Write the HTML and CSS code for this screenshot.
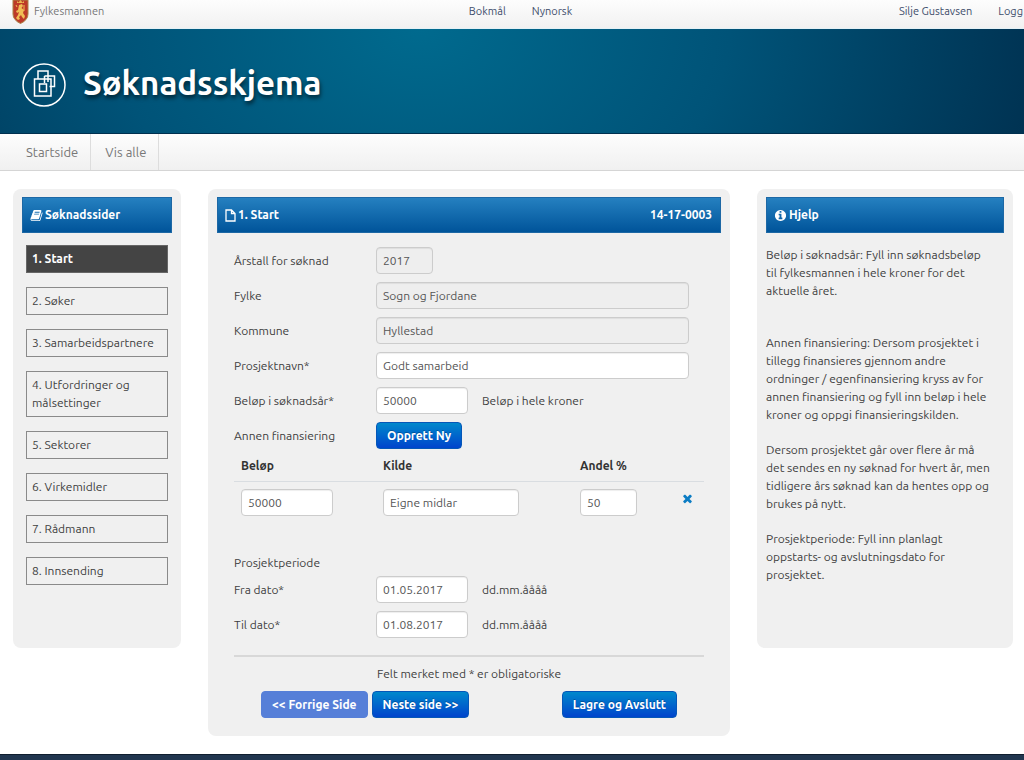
FILE: index.html
```html
<!DOCTYPE html>
<html lang="nb">
<head>
<meta charset="utf-8">
<meta name="viewport" content="width=device-width, initial-scale=1">
<title>Søknadsskjema</title>
<link rel="stylesheet" href="styles.css">
</head>
<body>
<div class="topbar">
  <div class="brand">
    <svg class="crest" viewBox="0 0 17 24" aria-hidden="true">
      <path d="M1 0h15v14q0 6-7.500 9.500Q1 20 1 14z" fill="#bd3a28" stroke="#a98145" stroke-width="1"/>
      <path d="M5 1l1.500 1.500L8.500 0l2 2.500L12 1v2H5z" fill="#e9b650"/>
      <path d="M7 5l3-1 1 2-1.500 2 2.500 2-1 3 2 3-1 3-2-2-1-2-2 2 1 2-2 1-2-2 2-3 1-3-2 1-1-2 2-1z" fill="#f0bd55"/>
      <path d="M12 5v6M4 5l1 2" stroke="#f0bd55" stroke-width="1"/>
    </svg>
    <span>Fylkesmannen</span>
  </div>
  <nav class="languages" aria-label="Språk"><a href="#">Bokmål</a><a href="#">Nynorsk</a></nav>
  <nav class="account" aria-label="Bruker"><a href="#">Silje Gustavsen</a><a href="#">Logg</a></nav>
</div>
<header class="banner">
  <svg class="emblem" viewBox="0 0 44 44" fill="none" stroke="#fff" aria-hidden="true">
    <circle cx="22" cy="22" r="21" stroke-width="1.500"/>
    <g stroke-width="1.500">
      <path d="M16 16V8h10v5"/>
      <path d="M29 23.500V33H12.500V16H22"/>
      <path d="M22.500 13h10v10.500h-5"/>
      <path d="M26 13v6M22.500 13v7M22 16h7v7.500"/>
      <rect x="17.500" y="21" width="7" height="7.500"/>
    </g>
  </svg>
  <h1>Søknadsskjema</h1>
</header>
<nav class="menu" aria-label="Hovedmeny"><a href="#">Startside</a><a href="#">Vis alle</a></nav>

<main class="columns">
  <aside class="panel">
    <h2 class="panel-title">
      <svg class="icon" viewBox="0 0 1792 1792" aria-hidden="true"><path d="M1703 478q40 57 18 129l-275 906q-19 64-76.500 107.500t-122.500 43.500h-923q-77 0-148.500-53.500t-99.500-131.500q-24-67-2-127 0-4 3-27t4-37q1-8-3-21.500t-3-19.500q2-11 8-21t16.500-23.500 16.500-23.500q23-38 45-91.500t30-91.500q3-10 .5-30t-.5-28q3-11 17-28t17-23q21-36 42-92t25-90q1-9-2.500-32t.5-28q4-13 22-30.500t22-22.500q19-26 42.500-84.500t27.500-96.500q1-8-3-25.500t-2-26.500q2-8 9-18t18-23 17-21q8-12 16.500-30.500t15-35 16-36 19.500-32 26.500-23.500 36-11.500 47.500 5.500l-1 3q38-9 51-9h761q74 0 114 56t18 130l-274 906q-36 119-71.500 153.500t-128.500 34.500h-869q-27 0-38 15-11 16-1 43 24 70 144 70h923q29 0 56-15.500t35-41.500l300-987q7-22 5-57 38 15 59 43zm-1064 2q-4 13 2 22.500t20 9.500h608q13 0 25.500-9.500t16.500-22.500l21-64q4-13-2-22.500t-20-9.500h-608q-13 0-25.500 9.500t-16.500 22.500zm-83 256q-4 13 2 22.500t20 9.500h608q13 0 25.500-9.500t16.500-22.500l21-64q4-13-2-22.500t-20-9.500h-608q-13 0-25.500 9.500t-16.500 22.500z"/></svg>
      <span>Søknadssider</span>
    </h2>
    <nav class="steps" aria-label="Søknadssider">
      <a class="step current" href="#" aria-current="page">1. Start</a>
      <a class="step" href="#">2. Søker</a>
      <a class="step" href="#">3. Samarbeidspartnere</a>
      <a class="step" href="#">4. Utfordringer og målsettinger</a>
      <a class="step" href="#">5. Sektorer</a>
      <a class="step" href="#">6. Virkemidler</a>
      <a class="step" href="#">7. Rådmann</a>
      <a class="step" href="#">8. Innsending</a>
    </nav>
  </aside>

  <section class="panel">
    <h2 class="panel-title">
      <svg class="icon narrow" viewBox="0 0 11 13" aria-hidden="true"><path d="M1 1h5.500L10 4.500V12H1zM6.500 1v3.500H10" fill="none" stroke="currentColor" stroke-width="1.300"/></svg>
      <span>1. Start</span>
      <span class="case-number">14-17-0003</span>
    </h2>
    <form class="form">
      <div class="row"><label for="year">Årstall for søknad</label><input id="year" class="field tiny" value="2017" disabled></div>
      <div class="row"><label for="county">Fylke</label><input id="county" class="field wide" value="Sogn og Fjordane" disabled></div>
      <div class="row"><label for="municipality">Kommune</label><input id="municipality" class="field wide" value="Hyllestad" disabled></div>
      <div class="row"><label for="project">Prosjektnavn*</label><input id="project" class="field wide" value="Godt samarbeid"></div>
      <div class="row"><label for="amount">Beløp i søknadsår*</label><input id="amount" class="field short" value="50000"><span class="hint">Beløp i hele kroner</span></div>
      <div class="row"><span class="row-label">Annen finansiering</span><button class="btn" type="button">Opprett Ny</button></div>
      <table class="funding">
        <thead>
          <tr><th class="col-amount" id="th-amount">Beløp</th><th class="col-source" id="th-source">Kilde</th><th class="col-share" id="th-share">Andel %</th><td></td></tr>
        </thead>
        <tbody>
          <tr>
            <td><input class="field short" value="50000" aria-labelledby="th-amount"></td>
            <td><input class="field medium" value="Eigne midlar" aria-labelledby="th-source"></td>
            <td><input class="field tiny" value="50" aria-labelledby="th-share"></td>
            <td><button class="remove" type="button" aria-label="Fjern"><svg class="icon" viewBox="0 0 1792 1792" aria-hidden="true"><path d="M1490 1322q0 40-28 68l-136 136q-28 28-68 28t-68-28l-294-294-294 294q-28 28-68 28t-68-28l-136-136q-28-28-28-68t28-68l294-294-294-294q-28-28-28-68t28-68l136-136q28-28 68-28t68 28l294 294 294-294q28-28 68-28t68 28l136 136q28 28 28 68t-28 68l-294 294 294 294q28 28 28 68z"/></svg></button></td>
          </tr>
        </tbody>
      </table>
      <p class="group-label">Prosjektperiode</p>
      <div class="row"><label for="from">Fra dato*</label><input id="from" class="field short" value="01.05.2017"><span class="hint">dd.mm.åååå</span></div>
      <div class="row"><label for="to">Til dato*</label><input id="to" class="field short" value="01.08.2017"><span class="hint">dd.mm.åååå</span></div>
      <hr class="rule">
      <p class="note">Felt merket med * er obligatoriske</p>
      <div class="actions">
        <button class="btn muted" type="button">&lt;&lt; Forrige Side</button>
        <button class="btn" type="button">Neste side &gt;&gt;</button>
        <button class="btn save" type="submit">Lagre og Avslutt</button>
      </div>
    </form>
  </section>

  <aside class="panel">
    <h2 class="panel-title">
      <svg class="icon" viewBox="0 0 1792 1792" aria-hidden="true"><path d="M1152 1376v-160q0-14-9-23t-23-9h-96v-512q0-14-9-23t-23-9h-320q-14 0-23 9t-9 23v160q0 14 9 23t23 9h96v320h-96q-14 0-23 9t-9 23v160q0 14 9 23t23 9h448q14 0 23-9t9-23zm-128-896v-160q0-14-9-23t-23-9h-192q-14 0-23 9t-9 23v160q0 14 9 23t23 9h192q14 0 23-9t9-23zm640 416q0 209-103 385.500t-279.500 279.500-385.500 103-385.500-103-279.500-279.500-103-385.500 103-385.500 279.500-279.500 385.500-103 385.500 103 279.500 279.500 103 385.500z"/></svg>
      <span>Hjelp</span>
    </h2>
    <div class="help">
      <p class="lead">Beløp i søknadsår: Fyll inn søknadsbeløp til fylkesmannen i hele kroner for det aktuelle året.</p>
      <p>Annen finansiering: Dersom prosjektet i tillegg finansieres gjennom andre ordninger / egenfinansiering kryss av for annen finansiering og fyll inn beløp i hele kroner og oppgi finansieringskilden.</p>
      <p>Dersom prosjektet går over flere år må det sendes en ny søknad for hvert år, men tidligere års søknad kan da hentes opp og brukes på nytt.</p>
      <p>Prosjektperiode: Fyll inn planlagt oppstarts- og avslutningsdato for prosjektet.</p>
    </div>
  </aside>
</main>
<footer class="footer"></footer>
</body>
</html>
```

FILE: styles.css
```css
* { box-sizing: border-box; }

body {
  margin: 0;
  min-height: 100vh;
  display: flex;
  flex-direction: column;
  background: #fff;
  color: #404040;
  font: 12px/18px Ubuntu, "Noto Sans", sans-serif;
}

a { color: inherit; text-decoration: none; }
h1, h2, p { margin: 0; }

.icon { width: 13px; height: 13px; fill: currentColor; flex: none; }
.icon.narrow { width: 11px; }

/* Top bar */
.topbar {
  display: grid;
  grid-template-columns: 1fr auto 1fr;
  align-items: start;
  height: 29px;
  padding: 0 1px 0 12px;
  background: linear-gradient(#fdfdfd, #f1f1f1);
  border-bottom: 1px solid #e4f1f6;
  color: #3d4d6b;
  font-size: 11px;
  line-height: 22px;
}
.brand { display: flex; gap: 5px; color: #777; }
.crest { width: 17px; height: 24px; }
.languages, .account { display: flex; gap: 26px; }
.languages { padding-left: 6px; }
.account { justify-content: flex-end; }

/* Banner */
.banner {
  display: flex;
  align-items: center;
  gap: 17px;
  height: 105px;
  padding: 8px 22px 0;
  background: radial-gradient(ellipse 620px 420px at 41% 0, #006a8e 0%, #005378 50%, #003353 100%);
  border-bottom: 1px solid #00304f;
}
.emblem { width: 44px; height: 44px; }
.banner h1 {
  color: #fff;
  font-size: 33px;
  font-weight: 600;
  line-height: 44px;
  padding-bottom: 5px;
  text-shadow: 1px 3px 4px rgba(0, 0, 0, .6);
}

/* Main menu */
.menu {
  display: flex;
  padding-left: 12px;
  background: linear-gradient(#fdfdfd, #f0f0f0);
  border-bottom: 1px solid #d5d5d5;
  color: #777;
  font-size: 13px;
}
.menu a { padding: 9px 12px 9px 14px; border-right: 1px solid #ddd; }

/* Columns */
.columns {
  flex: 1;
  display: grid;
  grid-template-columns: 168fr 522fr 256fr;
  gap: 27px;
  align-items: start;
  padding: 18px 11px 18px 13px;
}
.panel {
  min-width: 0;
  min-height: 459px;
  padding: 8px 9px 18px;
  background: #f0f0f0;
  border-radius: 8px;
}
.panel-title {
  display: flex;
  align-items: center;
  gap: 2px;
  height: 36px;
  padding: 0 8px 0 7px;
  background: linear-gradient(#2580c0, #00549a);
  border: 1px solid #1d68a5;
  color: #fff;
  font-size: 12px;
  font-weight: 600;
}
.case-number { margin-left: auto; }

/* Steps */
.steps { display: flex; flex-direction: column; gap: 14px; padding: 12px 4px 0; }
.step { padding: 4px 5px; border: 1px solid #8a8a8a; }
.step.current { background: #444; border-color: #666; color: #fff; font-weight: 600; }

/* Form */
.form { display: flex; flex-direction: column; gap: 8px; padding: 14px 17px 0; }
.row { display: flex; align-items: center; }
.row label, .row-label { width: 142px; flex: none; }
.hint { margin-left: 14px; }
.field {
  height: 27px;
  padding: 0 6px;
  border: 1px solid #ccc;
  border-radius: 4px;
  background: #fff;
  color: #555;
  font: inherit;
  box-shadow: inset 0 1px 1px rgba(0, 0, 0, .07);
}
.field:disabled { background: #eee; color: #555; }
.tiny { width: 57px; }
.short { width: 92px; }
.medium { width: 136px; }
.wide { width: 313px; }

.btn {
  height: 27px;
  padding: 0 10px;
  border: 1px solid #0557b8;
  border-radius: 4px;
  background: linear-gradient(#0088cc, #0044cc);
  color: #fff;
  font: inherit;
  font-weight: 600;
  text-shadow: 0 -1px 0 rgba(0, 0, 0, .25);
  white-space: nowrap;
}
.btn.muted { background: #567fd8; border-color: #567fd8; text-shadow: none; }

.funding { width: 100%; border-collapse: collapse; table-layout: fixed; }
.funding th { padding: 0 7px 6px; text-align: left; color: #333; font-weight: 600; }
.funding thead td { padding: 0; }
.funding tbody td { padding: 7px; border-top: 1px solid #d9dde1; vertical-align: top; }
.col-amount { width: 142px; }
.col-source { width: 197px; }
.col-share { width: 101px; }
.funding .field { display: block; }
.remove { display: block; padding: 3px 0 0; border: 0; background: none; color: #0b7cc4; }
.remove .icon { display: block; }

.group-label { margin: 23px 0 -4px; }
.rule { width: 100%; height: 2px; margin: 9px 0 0; border: 0; background: #d8d8d8; }
.note { text-align: center; }
.actions { display: flex; gap: 4px; padding: 0 27px; }
.save { margin-left: auto; }

/* Help */
.help { display: flex; flex-direction: column; gap: 17px; padding: 13px 13px 0 0; }
.help .lead { padding-bottom: 17px; }

.footer { height: 7px; background: #21364f; border-top: 1px solid #101e2e; }
```
